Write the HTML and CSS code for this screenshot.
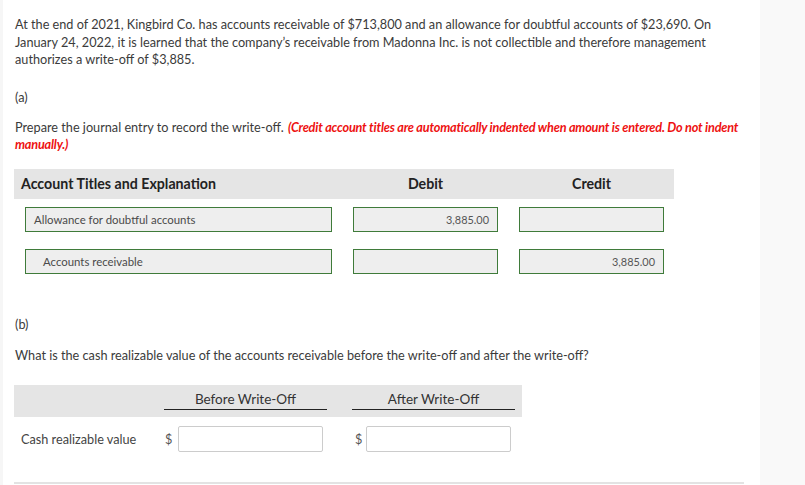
FILE: index.html
```html
<!DOCTYPE html>
<html>
<head>
<meta charset="utf-8">
<link rel="stylesheet" href="styles.css">
</head>
<body>
<div class="page">
  <main class="main">
    <p class="intro">At the end of 2021, Kingbird Co. has accounts receivable of $713,800 and an allowance for doubtful accounts of $23,690. On January 24, 2022, it is learned that the company’s receivable from Madonna Inc. is not collectible and therefore management authorizes a write-off of $3,885.</p>
    <p class="part">(a)</p>
    <p class="instr">Prepare the journal entry to record the write-off. <em class="note">(Credit account titles are automatically indented when amount is entered. Do not indent manually.)</em></p>

    <div class="journal">
      <div class="jhead">
        <span class="jh-acct">Account Titles and Explanation</span>
        <span class="jh-amt">Debit</span>
        <span class="jh-amt">Credit</span>
      </div>
      <div class="jrow">
        <div class="field acct">Allowance for doubtful accounts</div>
        <div class="field amt">3,885.00</div>
        <div class="field amt"></div>
      </div>
      <div class="jrow">
        <div class="field acct indent">Accounts receivable</div>
        <div class="field amt"></div>
        <div class="field amt">3,885.00</div>
      </div>
    </div>

    <p class="part part-b">(b)</p>
    <p class="question">What is the cash realizable value of the accounts receivable before the write-off and after the write-off?</p>

    <div class="crv">
      <div class="crv-head">
        <span class="crv-spacer"></span>
        <span class="crv-col">Before Write-Off</span>
        <span class="crv-col">After Write-Off</span>
      </div>
      <div class="crv-row">
        <span class="crv-label">Cash realizable value</span>
        <span class="cur">$</span>
        <div class="box"></div>
        <span class="cur cur2">$</span>
        <div class="box"></div>
      </div>
    </div>

    <div class="rule"></div>
  </main>
  <aside class="side"></aside>
</div>
</body>
</html>
```

FILE: styles.css
```css
html, body {
  margin: 0;
  padding: 0;
  background: #ffffff;
}

body {
  font-family: Lato, "Open Sans", "Liberation Sans", sans-serif;
  color: #3b3b3b;
  font-size: 12.7px;
}

.page {
  display: flex;
  width: 805px;
  height: 485px;
  overflow: hidden;
}

.main {
  flex: 0 0 758px;
  border-left: 3px solid #f6f6f6;
  padding-left: 11px;
  box-sizing: border-box;
  display: flex;
  flex-direction: column;
}

.side {
  flex: 1;
  background: #f9f9f9;
}

p {
  margin: 0;
}

.intro {
  margin-top: 16px;
  padding-left: 1px;
  line-height: 17.5px;
  width: 702px;
}

.part {
  margin-top: 20px;
  padding-left: 1px;
  line-height: 17px;
}

.instr {
  margin-top: 13px;
  padding-left: 1px;
  line-height: 17px;
  width: 745px;
}

.note {
  color: #ee1111;
  font-weight: bold;
  font-style: italic;
  letter-spacing: -0.2px;
  margin-left: 1px;
}

.journal {
  margin-top: 16px;
  width: 660px;
}

.jhead {
  display: flex;
  align-items: center;
  height: 30px;
  background: #e5e5e5;
  font-weight: bold;
  font-size: 14.2px;
  color: #222;
  column-gap: 21px;
}

.jh-acct {
  width: 318px;
  padding-left: 7px;
  box-sizing: border-box;
}

.jh-amt {
  width: 145px;
  text-align: center;
}

.jrow {
  display: flex;
  column-gap: 21px;
  padding-left: 11px;
  margin-top: 8px;
}

.jrow + .jrow {
  margin-top: 17px;
}

.field {
  height: 25px;
  box-sizing: border-box;
  background: #eeeeee;
  border: 1px solid #3f7b3a;
  font-size: 11.4px;
  color: #4a4a4a;
  display: flex;
  align-items: center;
}

.acct {
  width: 307px;
  padding-left: 8px;
}

.acct.indent {
  padding-left: 17px;
}

.amt {
  width: 145px;
  justify-content: flex-end;
  padding-right: 8px;
  font-size: 10.9px;
  color: #555;
}

.part-b {
  margin-top: 42px;
}

.question {
  margin-top: 14px;
  padding-left: 1px;
  line-height: 17px;
}

.crv {
  margin-top: 21px;
  width: 508px;
}

.crv-head {
  display: flex;
  align-items: flex-end;
  height: 32px;
  background: #e5e5e5;
  padding-bottom: 7px;
  box-sizing: border-box;
  column-gap: 25px;
}

.crv-spacer {
  width: 125px;
}

.crv-col {
  width: 163px;
  text-align: center;
  border-bottom: 1px solid #222;
  padding-bottom: 2px;
  font-size: 13.5px;
  color: #333;
}

.crv-row {
  display: flex;
  align-items: center;
  margin-top: 9px;
  height: 26px;
}

.crv-label {
  width: 151px;
  padding-left: 7px;
  box-sizing: border-box;
  color: #444;
}

.cur {
  width: 13px;
  color: #555;
}

.cur2 {
  margin-left: 32px;
  width: 11px;
}

.box {
  width: 145px;
  height: 26px;
  box-sizing: border-box;
  background: #fff;
  border: 1px solid #cccccc;
  border-radius: 2px;
}

.rule {
  margin-top: 30px;
  width: 730px;
  height: 2px;
  background: #e3e3e3;
}
```
